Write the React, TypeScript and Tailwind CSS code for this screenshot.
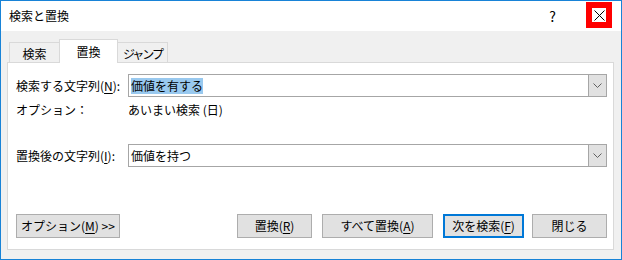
import React from "react";

const font = { fontFamily: '"Noto Sans CJK JP", "Noto Sans", sans-serif' };

function U({ children }: { children: React.ReactNode }) {
  return <span className="underline underline-offset-2 decoration-1">{children}</span>;
}

function Combo({ children }: { children: React.ReactNode }) {
  return (
    <div className="flex h-[23px] w-[479px] border border-[#a6a6a6] bg-white">
      <div className="flex flex-1 items-center pl-[2px]">{children}</div>
      <div className="flex w-[18px] items-center justify-center border-l border-[#a6a6a6] bg-[#e1e1e1]">
        <svg width="9" height="5" viewBox="0 0 9 5">
          <path d="M0.5 0.5 L4.5 4.5 L8.5 0.5" fill="none" stroke="#606060" strokeWidth="1" />
        </svg>
      </div>
    </div>
  );
}

function Btn({ w, ml, focus, children }: { w: string; ml: string; focus?: boolean; children: React.ReactNode }) {
  return (
    <div
      className={`flex h-[24px] items-center justify-center bg-[#e1e1e1] ${w} ${ml} ${
        focus ? "border-2 border-[#0078d7]" : "border border-[#adadad]"
      }`}
    >
      {children}
    </div>
  );
}

export default function App() {
  return (
    <div
      className="flex h-[260px] w-[622px] flex-col border border-[#1883d7] bg-[#f0f0f0] text-[12px] leading-[16px] text-black"
      style={font}
    >
      {/* title bar */}
      <div className="flex h-[30px] items-start bg-white">
        <div className="ml-[8px] mt-[7px]">検索と置換</div>
        <div className="ml-auto mt-[6px] text-[14px] leading-[18px]">?</div>
        <div className="ml-[30px] mr-[9px] mt-[1px] flex h-[26px] w-[26px] items-center justify-center border-[6px] border-[#ff0000] bg-white">
          <svg width="11" height="11" viewBox="0 0 11 11">
            <path d="M0.5 0.5 L10.5 10.5 M10.5 0.5 L0.5 10.5" stroke="#000" strokeWidth="1" />
          </svg>
        </div>
      </div>

      {/* tabs */}
      <div className="mt-[8px] flex h-[23px] items-end pl-[8px]">
        <div className="flex h-[20px] w-[50px] items-center justify-center border-l border-t border-[#d9d9d9] pt-[2px]">
          検索
        </div>
        <div className="relative z-10 -mb-[1px] flex h-[24px] w-[59px] items-center justify-center border-l border-r border-t border-[#d9d9d9] bg-white">
          置換
        </div>
        <div className="flex h-[20px] w-[50px] items-center justify-center border-r border-t border-[#d9d9d9] pt-[2px] tracking-[-2px]">
          ジャンプ
        </div>
      </div>

      {/* panel */}
      <div className="ml-[6px] mr-[7px] flex h-[188px] flex-col border border-[#d9d9d9] bg-white pl-[8px] pr-[6px] pt-[11px]">
        <div className="flex h-[23px] items-center">
          <div className="w-[112px]">
            検索する文字列(<U>N</U>):
          </div>
          <Combo>
            <span className="bg-[#99c9ef]">価値を有する</span>
          </Combo>
        </div>
        <div className="mt-[3px] flex h-[20px] items-center">
          <div className="w-[112px]">オプション：</div>
          <div>あいまい検索 (日)</div>
        </div>
        <div className="mt-[24px] flex h-[23px] items-center">
          <div className="w-[112px]">
            置換後の文字列(<U>I</U>):
          </div>
          <Combo>
            <span>価値を持つ</span>
          </Combo>
        </div>
        <div className="mt-[47px] flex h-[24px] items-center">
          <Btn w="w-[104px]" ml="ml-0">
            オプション(<U>M</U>)&nbsp;&gt;&gt;
          </Btn>
          <Btn w="w-[75px]" ml="ml-auto">
            置換(<U>R</U>)
          </Btn>
          <Btn w="w-[111px]" ml="ml-[10px]">
            すべて置換(<U>A</U>)
          </Btn>
          <Btn w="w-[81px]" ml="ml-[10px]" focus>
            次を検索(<U>F</U>)
          </Btn>
          <Btn w="w-[75px]" ml="ml-[8px]">
            閉じる
          </Btn>
        </div>
      </div>
    </div>
  );
}
